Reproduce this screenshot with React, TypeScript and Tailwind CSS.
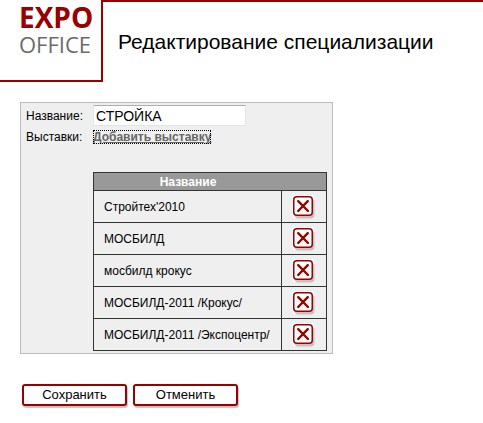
import { useState } from "react";

const initialExhibitions = [
  { id: 1, name: "Стройтех'2010" },
  { id: 2, name: "МОСБИЛД" },
  { id: 3, name: "мосбилд крокус" },
  { id: 4, name: "МОСБИЛД-2011 /Крокус/" },
  { id: 5, name: "МОСБИЛД-2011 /Экспоцентр/" },
];

const buttonClass =
  "h-[22px] rounded-[3px] border-2 border-[#990000] bg-white text-[13px] leading-4 text-black shadow-[1px_2px_1px_#c4c4c4]";

function DeleteIcon() {
  return (
    <svg width="24" height="24" viewBox="0 0 24 24" fill="none" aria-hidden="true">
      <rect x="0" y="0" width="22" height="23" rx="3" fill="#fff" />
      <rect x="2.5" y="3.5" width="20" height="20" rx="4" fill="#c4c4c4" />
      <rect x="1.75" y="1.75" width="18.5" height="18.5" rx="3" fill="#fff" stroke="#990000" strokeWidth="1.5" />
      <path d="M6.2 6.2L16 16M15.8 6.2L6.2 16" stroke="#990000" strokeWidth="2.4" strokeLinecap="round" />
    </svg>
  );
}

export default function App() {
  const [name, setName] = useState("СТРОЙКА");
  const [exhibitions, setExhibitions] = useState(initialExhibitions);

  const remove = (id: number) => {
    setExhibitions(exhibitions.filter((item) => item.id !== id));
  };

  return (
    <div className="min-h-screen bg-white font-['Liberation_Sans',Arial,sans-serif] text-xs text-black">
      {/* Header */}
      <header className="flex">
        <a
          href="#"
          className="flex h-[82px] w-[103px] shrink-0 flex-col border-r-2 border-b-2 border-[#990000] pl-[19px] font-['Open_Sans',sans-serif]"
        >
          <span className="text-[28px] leading-[34px] font-bold text-[#990000]">EXPO</span>
          <span className="text-[22px] leading-5 text-[#6b6b6b]">OFFICE</span>
        </a>
        <div className="flex-1 border-t-2 border-[#990000] pt-7 pl-[15px]">
          <h1 className="text-[21px] leading-6 whitespace-nowrap">Редактирование специализации</h1>
        </div>
      </header>

      <form className="px-5 pt-5" onSubmit={(e) => e.preventDefault()}>
        {/* Fields */}
        <div className="w-fit border border-[#bbbbbb] bg-[#efefef] pt-0.5 pr-[5px] pb-0.5 pl-[5px]">
          <div className="flex items-center">
            <label htmlFor="name" className="w-[67px]">Название:</label>
            <input
              id="name"
              value={name}
              onChange={(e) => setName(e.target.value)}
              className="h-[21px] w-[153px] border border-[#e0e4ec] border-t-[#abadb3] bg-white px-0.5 text-sm leading-4 outline-none"
            />
          </div>

          <div className="flex pt-1">
            <span className="w-[67px] leading-[14px]">Выставки:</span>
            <div>
              <a
                href="#"
                className="block w-fit leading-[14px] font-bold text-[#666666] underline outline-1 -outline-offset-1 outline-dotted outline-black"
              >
                Добавить выставку
              </a>
              <table className="mt-7 w-[234px] border-collapse">
                <thead>
                  <tr>
                    <th colSpan={2} className="h-[18px] border border-[#333333] bg-[#999999] pr-11 leading-4 text-white">
                      Название
                    </th>
                  </tr>
                </thead>
                <tbody>
                  {exhibitions.map((item) => (
                    <tr key={item.id}>
                      <td className="h-8 border border-[#333333] pl-2.5 whitespace-nowrap">{item.name}</td>
                      <td className="w-[45px] border border-[#333333]">
                        <button
                          type="button"
                          aria-label={`Удалить ${item.name}`}
                          onClick={() => remove(item.id)}
                          className="mx-auto block"
                        >
                          <DeleteIcon />
                        </button>
                      </td>
                    </tr>
                  ))}
                </tbody>
              </table>
            </div>
          </div>
        </div>

        {/* Actions */}
        <div className="flex gap-1.5 pt-[30px] pl-0.5">
          <button type="submit" className={`w-[105px] ${buttonClass}`}>Сохранить</button>
          <button type="button" className={`w-[105px] ${buttonClass}`}>Отменить</button>
        </div>
      </form>
    </div>
  );
}
